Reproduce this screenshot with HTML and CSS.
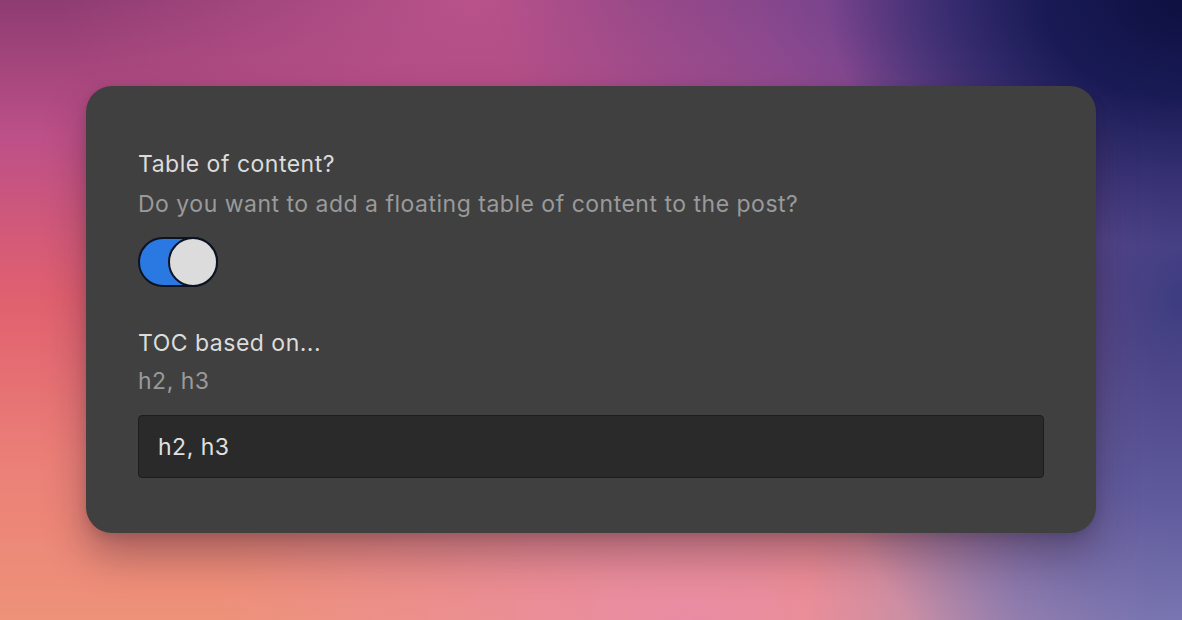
FILE: index.html
```html
<!DOCTYPE html>
<html lang="en">
<head>
<meta charset="utf-8">
<title>Table of content settings</title>
<link rel="stylesheet" href="styles.css">
</head>
<body>
<main class="stage">
  <section class="card">
    <div class="field">
      <h2 class="label">Table of content?</h2>
      <p class="hint">Do you want to add a floating table of content to the post?</p>
      <button class="toggle is-on" type="button" aria-pressed="true" aria-label="Table of content">
        <span class="knob"></span>
      </button>
    </div>
    <div class="field field-toc">
      <h2 class="label">TOC based on...</h2>
      <p class="hint">h2, h3</p>
      <input class="text-input" type="text" value="h2, h3">
    </div>
  </section>
</main>
</body>
</html>
```

FILE: styles.css
```css
* { box-sizing: border-box; }

html, body {
  margin: 0;
  height: 100%;
}

body {
  font-family: Inter, "Noto Sans", "Liberation Sans", sans-serif;
  background:
    radial-gradient(ellipse 30% 40% at 100% 0%, #0d1040 0%, rgba(18,22,80,0.9) 40%, rgba(30,34,100,0) 100%),
    radial-gradient(ellipse 32% 75% at 100% 48%, rgba(52,58,130,0.95) 0%, rgba(72,74,148,0.75) 45%, rgba(90,88,160,0) 100%),
    radial-gradient(ellipse 32% 55% at 100% 100%, #9a95c8 0%, rgba(150,142,198,0.75) 45%, rgba(150,142,198,0) 100%),
    radial-gradient(ellipse 40% 55% at 82% 0%, rgba(96,66,146,0.95) 0%, rgba(124,74,152,0.6) 45%, rgba(150,80,150,0) 100%),
    radial-gradient(ellipse 40% 45% at 58% 100%, #e98ca4 0%, rgba(233,140,164,0) 100%),
    radial-gradient(ellipse 35% 30% at 40% 0%, rgba(196,88,146,0.8) 0%, rgba(196,88,146,0) 100%),
    linear-gradient(180deg, #8e3c72 0%, #bd5088 22%, #e0606f 48%, #eb7f77 74%, #ee9279 100%);
  overflow: hidden;
}

.stage {
  height: 100%;
  padding: 86px 86px 87px;
  display: flex;
  align-items: stretch;
}

.card {
  flex: 1;
  background: #404040;
  border-radius: 26px;
  padding: 63px 52px 55px;
  box-shadow: 0 22px 40px rgba(40, 20, 40, 0.35), 0 4px 12px rgba(0, 0, 0, 0.12);
  display: flex;
  flex-direction: column;
}

.field {
  display: flex;
  flex-direction: column;
  align-items: flex-start;
}

.field-toc {
  margin-top: 41px;
}

.label {
  margin: 0;
  font-size: 23px;
  font-weight: 400;
  line-height: 30px;
  letter-spacing: 0.5px;
  color: #dcdcdc;
}

.hint {
  margin: 10px 0 0;
  font-size: 23px;
  line-height: 30px;
  letter-spacing: 0.5px;
  color: #9a9a9a;
}

.field-toc .hint {
  margin-top: 8px;
}

.toggle {
  margin-top: 18px;
  width: 80px;
  height: 50px;
  padding: 0;
  border: 2px solid #0c1322;
  border-radius: 25px;
  background: #2a78e2;
  display: flex;
  justify-content: flex-end;
  align-items: stretch;
  cursor: pointer;
}

.knob {
  width: 50px;
  margin: -2px -2px -2px 0;
  border: 2px solid #0c1322;
  border-radius: 50%;
  background: #dcdcdc;
}

.text-input {
  margin-top: 19px;
  width: 100%;
  height: 63px;
  padding: 0 19px;
  background: #2a2a2a;
  border: 1px solid #1d1d1d;
  border-radius: 4px;
  font-family: inherit;
  font-size: 23px;
  letter-spacing: 0.5px;
  color: #e0e0e0;
  outline: none;
}
```
